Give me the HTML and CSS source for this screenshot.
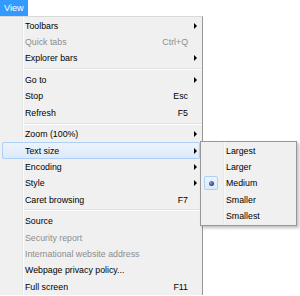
FILE: index.html
```html
<!DOCTYPE html>
<html lang="en">
<head>
  <meta charset="UTF-8">
  <title>View menu</title>
  <link rel="stylesheet" href="styles.css">
</head>
<body>

  <div class="menubar">
    <span class="menubar-item active">View</span>
  </div>

  <div class="menu">
    <div class="item"><span class="label">Toolbars</span><span class="key"></span><span class="arrow"></span></div>
    <div class="item disabled"><span class="label">Quick tabs</span><span class="key">Ctrl+Q</span><span class="arrow none"></span></div>
    <div class="item"><span class="label">Explorer bars</span><span class="key"></span><span class="arrow"></span></div>
    <div class="sep"></div>
    <div class="item"><span class="label">Go to</span><span class="key"></span><span class="arrow"></span></div>
    <div class="item"><span class="label">Stop</span><span class="key">Esc</span><span class="arrow none"></span></div>
    <div class="item"><span class="label">Refresh</span><span class="key">F5</span><span class="arrow none"></span></div>
    <div class="sep"></div>
    <div class="item"><span class="label">Zoom (100%)</span><span class="key"></span><span class="arrow"></span></div>
    <div class="item active">
      <span class="label">Text size</span><span class="key"></span><span class="arrow"></span>

      <!-- open submenu -->
      <div class="submenu">
        <div class="subitem"><span class="check"></span><span class="label">Largest</span></div>
        <div class="subitem"><span class="check"></span><span class="label">Larger</span></div>
        <div class="subitem"><span class="check on"></span><span class="label">Medium</span></div>
        <div class="subitem"><span class="check"></span><span class="label">Smaller</span></div>
        <div class="subitem"><span class="check"></span><span class="label">Smallest</span></div>
      </div>
    </div>
    <div class="item"><span class="label">Encoding</span><span class="key"></span><span class="arrow"></span></div>
    <div class="item"><span class="label">Style</span><span class="key"></span><span class="arrow"></span></div>
    <div class="item"><span class="label">Caret browsing</span><span class="key">F7</span><span class="arrow none"></span></div>
    <div class="sep"></div>
    <div class="item"><span class="label">Source</span><span class="key"></span><span class="arrow none"></span></div>
    <div class="item disabled"><span class="label">Security report</span><span class="key"></span><span class="arrow none"></span></div>
    <div class="item disabled"><span class="label">International website address</span><span class="key"></span><span class="arrow none"></span></div>
    <div class="item"><span class="label">Webpage privacy policy...</span><span class="key"></span><span class="arrow none"></span></div>
    <div class="item"><span class="label">Full screen</span><span class="key">F11</span><span class="arrow none"></span></div>
  </div>

</body>
</html>
```

FILE: styles.css
```css
body {
  margin: 0;
  background: #fff;
  font-family: "Liberation Sans", Arial, sans-serif;
  font-size: 8.8px;
  color: #000;
}

.menubar {
  height: 16px;
}

.menubar-item {
  display: inline-block;
  box-sizing: border-box;
  width: 28px;
  height: 16px;
  line-height: 16px;
  padding-left: 4px;
  font-size: 9.2px;
  color: #fff;
}

.menubar-item.active {
  background: #3399ff;
}

.menu {
  position: relative;
  width: 202px;
  padding: 0.5px 0;
  background: #f0f0f0;
  border-top: 1px solid #d9d9d9;
  border-right: 1px solid #979797;
}

/* icon gutter */
.menu::before {
  content: "";
  position: absolute;
  left: 22px;
  top: 0;
  bottom: 0;
  width: 1px;
  background: #e8e8e8;
  border-right: 1px solid #fafafa;
}

.item {
  position: relative;
  display: flex;
  align-items: center;
  height: 16.33px;
  margin: 0 2px;
  padding-left: 23px;
}

.item .label {
  flex: 1;
  white-space: nowrap;
}

.item .key {
  text-align: right;
}

.item .arrow {
  width: 12px;
  height: 6px;
  flex: none;
}

.item .arrow::after {
  content: "";
  display: block;
  width: 0;
  height: 0;
  margin-left: 6px;
  border-left: 3px solid #000;
  border-top: 3px solid transparent;
  border-bottom: 3px solid transparent;
}

.item .arrow.none::after {
  display: none;
}

.item.disabled {
  color: #8d8d8d;
}

.item.active {
  background: linear-gradient(#edf4fc, #dce9f9);
  box-shadow: inset 0 0 0 1px #aecff7;
  border-radius: 2px;
}

.sep {
  position: relative;
  height: 1px;
  margin: 1.7px 0 1.67px 24px;
  background: #e0e0e0;
  border-bottom: 1px solid #fff;
}

.submenu {
  position: absolute;
  left: 198px;
  top: -1.5px;
  width: 95px;
  padding: 0.5px 0;
  background: #f0f0f0;
  border: 1px solid #979797;
  box-shadow: 2px 2px 3px rgba(0, 0, 0, 0.25);
  z-index: 2;
}

.submenu::before {
  content: "";
  position: absolute;
  left: 22px;
  top: 0;
  bottom: 0;
  width: 1px;
  background: #e8e8e8;
  border-right: 1px solid #fafafa;
}

.subitem {
  display: flex;
  align-items: center;
  height: 16.33px;
}

.check {
  position: relative;
  width: 14px;
  height: 14px;
  margin: 0 8px 0 3px;
  flex: none;
}

.check.on {
  background: linear-gradient(#eef5fd, #dbe9f9);
  box-shadow: inset 0 0 0 1px #aecff7;
  border-radius: 2px;
}

.check.on::after {
  content: "";
  position: absolute;
  left: 4.5px;
  top: 4.5px;
  width: 5px;
  height: 5px;
  border-radius: 50%;
  background: radial-gradient(circle at 35% 35%, #8c9ce0, #2b3c8c 70%);
}
```
